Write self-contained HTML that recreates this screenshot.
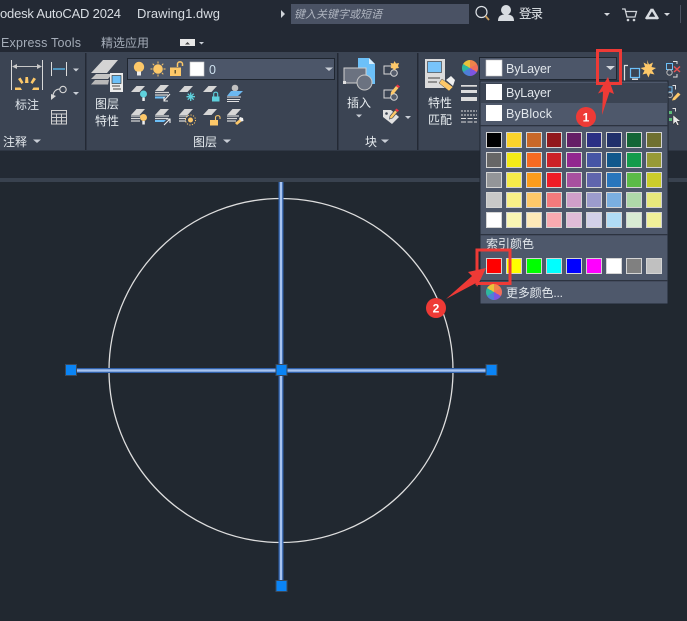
<!DOCTYPE html>
<html><head><meta charset="utf-8"><style>
html,body{margin:0;padding:0;background:#212830;width:687px;height:621px;overflow:hidden}
svg{position:absolute;left:0;top:0}
text{font-family:"Liberation Sans","Noto Sans CJK SC",sans-serif;fill:#e4eaef;font-size:12px}
.w{position:absolute;border-radius:50%;background:conic-gradient(#f0834a 0 60deg,#f26d5b 60deg 120deg,#7d55e0 120deg 180deg,#4e7fd8 180deg 240deg,#2fb89e 240deg 300deg,#e9c23a 300deg 360deg)}
</style></head><body>
<svg width="687" height="621" viewBox="0 0 687 621" xmlns="http://www.w3.org/2000/svg">
<defs>
<path id="p" d="M5.500 0H14L8.500 6H0Z" fill="#d6d6d6"/>
</defs>
<rect width="687" height="621" fill="#212830"/>
<!-- title bar -->
<rect width="687" height="52" fill="#232934"/>
<text x="0" y="18" textLength="121" style="fill:#d8dde3;font-size:13px">odesk AutoCAD 2024</text>
<text x="137" y="18" textLength="83" style="fill:#d8dde3;font-size:13px">Drawing1.dwg</text>
<path d="M281 10l4 4-4 4z" fill="#d0d4da"/>
<rect x="291" y="4" width="178" height="20" fill="#4a5264"/>
<text x="294" y="18" textLength="88" style="fill:#aeb4bf;font-size:11px;font-style:italic">键入关键字或短语</text>
<circle cx="481.500" cy="12" r="5.500" fill="none" stroke="#dde1e6" stroke-width="1.200"/><path d="M485.500 16l3.500 4" stroke="#c89a5a" stroke-width="1.800"/>
<circle cx="506" cy="10" r="5" fill="#d8dce1"/><path d="M498 21c0-6 4-6.500 8-6.500s8 .5 8 6.500z" fill="#d8dce1"/>
<text x="519" y="18" textLength="24" style="fill:#e4e8ec;font-size:12.500px">登录</text>
<path d="M604 13h6l-3 3z" fill="#d5d8dd"/>
<path d="M622 9h3l2 8h8l1.500-5.500H626" fill="none" stroke="#cfd3d8" stroke-width="1.300"/><circle cx="628" cy="20" r="1.300" fill="#cfd3d8"/><circle cx="634" cy="20" r="1.300" fill="#cfd3d8"/>
<path d="M652 9l-6 10M652 9l6 10M647 18h10" stroke="#d8dce1" stroke-width="2.500" fill="none"/>
<path d="M664 13h6l-3 3z" fill="#d5d8dd"/>
<rect x="680" y="5" width="1" height="18" fill="#4a5160"/>
<!-- tabs -->
<text x="1" y="47" textLength="80" style="fill:#a4acb8;font-size:12.500px">Express Tools</text>
<text x="101" y="47" textLength="48" style="fill:#a4acb8">精选应用</text>
<rect x="180" y="39" width="15" height="7" fill="#e8e8e8"/><path d="M185 44.500h5l-2.500-2.500z" fill="#444"/>
<path d="M199 42h5l-2.500 2.500z" fill="#c9ced6"/>
<!-- ribbon -->
<rect y="52" width="687" height="98.500" fill="#3b4453"/>
<rect x="85" y="53" width="1.500" height="97" fill="#232934"/>
<rect x="337" y="53" width="1.500" height="97" fill="#232934"/>
<rect x="417" y="53" width="1.500" height="97" fill="#232934"/>
<rect x="0" y="150.500" width="687" height="27.500" fill="#232a34"/>
<rect x="0" y="178" width="687" height="4" fill="#39424f"/>
<!-- annotate panel -->
<path d="M11.500 60v30M42.500 60v30" stroke="#d8d8d8" stroke-width="1"/>
<path d="M13 66.500H41" stroke="#c8c8c8" stroke-width="1"/><path d="M12 66.500l5-2.500v5zM42 66.500l-5-2.500v5z" fill="#c8c8c8"/>
<path d="M25.500 77h2.500l.5 6h-3.500zM18 79l2.500-1.500 3 5-2 1.500zM36 79l-2.500-1.500-3 5 2 1.500zM15 87.500h5.500l1.500 2.500h-7zM39 87.500h-5.500l-1.500 2.500h7z" fill="#fdc869"/>
<text x="15" y="109" textLength="24" style="fill:#dde3e9">标注</text>
<path d="M51.500 62v14M66.500 62v14" stroke="#dcdcdc"/><path d="M53 69H65" stroke="#5cc0f5" stroke-width="1.300"/>
<path d="M73 68.500h6l-3 3z" fill="#c9ced6"/>
<circle cx="63" cy="89.500" r="3.200" fill="none" stroke="#d8d8d8" stroke-width="1.100"/><path d="M60 89c-4 0-6 2-7 6" fill="none" stroke="#d8d8d8" stroke-width="1.100"/><path d="M51 100l0-6 5 2z" fill="#d8d8d8"/>
<path d="M73 92h6l-3 3z" fill="#c9ced6"/>
<path d="M51.500 110.500h15v13.500h-15zM51.500 114h15M51.500 117.500h15M51.500 121h15M56.500 114v10M61.500 114v10" fill="none" stroke="#d0d0d0" stroke-width="1"/>
<text x="3" y="146" textLength="24" style="fill:#e0e5ea">注释</text>
<path d="M33 139.500h8l-4 3.500z" fill="#c9ced6"/>
<!-- layers panel -->
<path d="M91 73l12-13h15l-11 13z" fill="#d4d4d4"/><path d="M91 79l5-5h16l-4 5z" fill="#c4c4c4"/><path d="M91 84.500l4-4.500h14l-1 4.500z" fill="#b8b8b8"/>
<rect x="110" y="73" width="13" height="19" fill="#ececec"/><rect x="112" y="75.500" width="9" height="8" fill="#6cc0f8" stroke="#222" stroke-width=".6"/><path d="M112 86h8M113 89h8" stroke="#444" stroke-width="1"/>
<text x="95" y="108" textLength="24" style="fill:#e6ebef">图层</text>
<text x="95" y="125" textLength="24" style="fill:#e6ebef">特性</text>
<rect x="127.500" y="58.500" width="207" height="21" fill="#4c5669" stroke="#1f2630"/>
<circle cx="139" cy="67" r="5.200" fill="#fdc869"/><rect x="137" y="71.500" width="4" height="4" fill="#ececec"/>
<circle cx="158" cy="69" r="4.800" fill="#fdc869"/><path d="M158 61.500v2M158 74.500v2M150.500 69h2M163.500 69h2M152.700 63.700l1.400 1.400M161.900 72.900l1.400 1.400M163.300 63.700l-1.400 1.400M154.100 72.900l-1.400 1.400" stroke="#fdc869" stroke-width="1"/>
<rect x="170" y="67.500" width="11" height="8.500" fill="#fdc869"/><path d="M177.500 67v-3c0-2.800 5-2.800 5 0v2" fill="none" stroke="#fdc869" stroke-width="1.500"/><rect x="174.500" y="70" width="1.500" height="3.500" fill="#6a5a30"/>
<rect x="190" y="62" width="14" height="14" fill="#fff" stroke="#c8c8c8" stroke-width=".6"/>
<text x="209" y="74" style="fill:#cde0ee;font-size:12.500px">0</text>
<path d="M325 67.500h8l-4 3.500z" fill="#c9ced6"/>
<!-- layer icons row 1 -->
<use href="#p" x="131" y="86"/><circle cx="143.500" cy="94" r="3.500" fill="#5ed0dc"/><rect x="142.300" y="97.500" width="2.500" height="3.500" fill="#eee"/>
<use href="#p" x="155" y="85"/><path d="M155 92.500h14M155 95h13" stroke="#d6d6d6" stroke-width="1.300"/><path d="M155 96.500h11l-2 2h-9z" fill="#6cc0f8"/><path d="M170 94l-6 6.500M164 97v4h4" stroke="#eee" stroke-width="1.100" fill="none"/>
<use href="#p" x="179" y="86"/><path d="M190.700 92.500v8.500M186.500 96.700h8.500M187.700 93.700l6 6M193.700 93.700l-6 6" stroke="#5ed0dc" stroke-width="1.300"/>
<use href="#p" x="203" y="86"/><rect x="212" y="96.500" width="7.500" height="5" fill="#5ed0dc"/><path d="M213.700 96.500v-2.500c0-2.400 4-2.400 4 0v2.500" fill="none" stroke="#5ed0dc" stroke-width="1.100"/>
<circle cx="235" cy="88" r="3.300" fill="#c0c0c0"/><path d="M231 91h12l-5 5h-11z" fill="#6cb8f0"/><path d="M227 97h14M227 99.500h13M227 101.500h12" stroke="#e0e0e0"/>
<!-- row 2 -->
<use href="#p" x="131" y="109"/><path d="M131 116h10M131 118.500h9M131 121h9" stroke="#d6d6d6" stroke-width="1.300"/><circle cx="143.500" cy="117.500" r="3.500" fill="#fdc869"/><rect x="142.300" y="121" width="2.500" height="3.500" fill="#eee"/>
<use href="#p" x="155" y="109"/><path d="M155 116h14M155 118.500h13" stroke="#d6d6d6" stroke-width="1.300"/><path d="M155 120h11l-2 2h-9z" fill="#6cc0f8"/><path d="M164 125l6-6M166 119h4v4" stroke="#eee" stroke-width="1.100" fill="none"/>
<use href="#p" x="179" y="109"/><path d="M179 116h9M179 118.500h7M179 121h7" stroke="#d6d6d6" stroke-width="1.300"/><circle cx="190.500" cy="120" r="2.500" fill="#fdc869"/><circle cx="190.500" cy="120" r="5" fill="none" stroke="#fdc869" stroke-dasharray="1.200 1.400"/>
<use href="#p" x="203" y="109"/><rect x="210" y="120" width="8" height="5.500" fill="#fdc869"/><path d="M215.500 120v-2.500c0-2.500 4.500-2.500 4.500 0v1.500" fill="none" stroke="#fdc869" stroke-width="1.100"/>
<use href="#p" x="227" y="109"/><path d="M227 116h12M227 118.500h10M227 121h9" stroke="#d6d6d6" stroke-width="1.300"/><path d="M235 123l5-4 2 2-5 4z" fill="#fdc869"/><path d="M240 117l3 1 .5 3-2 .5-2.500-2.500z" fill="#f0f0f0"/>
<text x="193" y="146" textLength="24" style="fill:#e6ebef">图层</text>
<path d="M223 139.500h8l-4 3.500z" fill="#c9ced6"/>
<!-- block panel -->
<path d="M358 58h11l6 6v20h-17z" fill="#6cc0f8"/><path d="M369 58l6 6h-6z" fill="#d8eefc"/>
<rect x="344" y="68" width="22" height="15" fill="#6b7280" stroke="#d0d0d0" stroke-width="1"/><rect x="343" y="81" width="3" height="3" fill="#e0e0e0"/>
<circle cx="364.500" cy="82.500" r="7.500" fill="#6b7280" stroke="#c8c8c8" stroke-width="1"/>
<text x="347" y="107" textLength="24" style="fill:#e6ebef">插入</text>
<path d="M356 114.500h6l-3 3z" fill="#c9ced6"/>
<path d="M384 66h10v8h-10z" fill="none" stroke="#d8d8d8"/><circle cx="394" cy="73" r="3.300" fill="#555d6c" stroke="#d8d8d8"/><path d="M394.500 61l1.500 2.500 3-.5-1 3 1 2-3 .5-1.500 2-1.500-2-2.500-.5 1-2-1-3 3 .5z" fill="#fdc869"/>
<path d="M384 90h10v8h-10z" fill="none" stroke="#d8d8d8"/><circle cx="394" cy="97" r="3.300" fill="#555d6c" stroke="#d8d8d8"/><path d="M391 92l5-6 2.500 2-5 6-3 1z" fill="#fdc869"/><path d="M396 86l1.500-1.500 2.500 2-1.500 1.500z" fill="#e34"/>
<path d="M383 110h8l8 7-7 7-9-7z" fill="#e2e2e2"/><circle cx="386.500" cy="113.500" r="1.300" fill="#3b4453"/><path d="M390 116l5-6 2.500 2-5 6-3 1z" fill="#fdc869" stroke="#3b4453" stroke-width=".6"/><path d="M395 110l1.500-1.500 2.500 2-1.500 1.500z" fill="#e34"/>
<path d="M405 116h6l-3 3z" fill="#c9ced6"/>
<text x="365" y="146" style="fill:#e6ebef">块</text>
<path d="M381 139.500h8l-4 3.500z" fill="#c9ced6"/>
<!-- properties panel -->
<rect x="425" y="59" width="20" height="29" fill="#dcdcdc"/><rect x="427.500" y="61.500" width="14" height="11" fill="#78c4fa" stroke="#333" stroke-width=".6"/><path d="M428 78h12M428 82h9" stroke="#444" stroke-width=".9"/>
<path d="M439 83l3-4 11 8-4 4z" fill="#fdc869" stroke="#3b4453" stroke-width=".5"/><path d="M446 80l5-4 4 4-2 6z" fill="#f0f0f0"/>
<text x="428" y="107" textLength="24" style="fill:#e6ebef">特性</text>
<text x="428" y="124" textLength="24" style="fill:#e6ebef">匹配</text>
<rect x="461" y="85" width="16" height="1.700" fill="#dcdcdc"/><rect x="461" y="90" width="16" height="3" fill="#dcdcdc"/><rect x="461" y="97" width="16" height="4" fill="#dcdcdc"/>
<path d="M461 111h16M461 115h16" stroke="#dcdcdc" stroke-dasharray="2 1"/><path d="M461 118.500h16M461 122h16" stroke="#dcdcdc" stroke-dasharray="5 1.500"/>
<!-- color combo -->
<rect x="479.500" y="57.500" width="137" height="22" fill="#4c5669" stroke="#1f2630"/>
<rect x="486" y="60" width="16" height="16" fill="#fff" stroke="#c8c8c8" stroke-width=".6"/>
<text x="506" y="73" textLength="45" style="fill:#e2e7ec;font-size:12.500px">ByLayer</text>
<path d="M606 66h9l-4.500 4z" fill="#d2d6dc"/>
<!-- right tools -->
<path d="M628 65.500h-3.500V81" fill="none" stroke="#e0e0e0" stroke-width="1.200"/>
<rect x="630.500" y="68.500" width="9" height="9" fill="none" stroke="#6cc0f8" stroke-width="1.200"/>
<rect x="632" y="78.500" width="6" height="1.500" fill="#dcdcdc"/>
<path d="M647 60l2 4.500 4-2-1.500 4.500 4.500 1-4 2.500 2.500 4-4.500-1-1.500 4-2-4-4 1 2-4-4-2.500 4.500-1-1.500-4.500 4 2z" fill="#fdc869"/>
<rect x="666.500" y="63.500" width="6" height="6" fill="none" stroke="#6cc0f8"/><circle cx="669.500" cy="72.500" r="2.700" fill="none" stroke="#b8b8b8"/><path d="M674 66.500l6 5.500M680 66.500l-6 5.500" stroke="#e85050" stroke-width="1.500"/><path d="M673 61.500h4v2.500M677 74v3h-4" fill="none" stroke="#e0e0e0"/>
<path d="M672.500 85.500h3v4" fill="none" stroke="#e0e0e0"/><rect x="668" y="87" width="4" height="5" fill="none" stroke="#6cc0f8"/><circle cx="670" cy="95" r="2.500" fill="none" stroke="#b8b8b8"/><path d="M673 98l5-5.500 2.500 2-5.500 5.500-3 .5z" fill="#fdc869"/>
<path d="M673 115v9.500l2.500-2.500 1.800 3.500 1.700-.8-1.800-3.400h3.500z" fill="#e8e8e8" stroke="#333" stroke-width=".5"/><path d="M669 111h3v3h-3zM669 118h3v3h-3z" fill="#5bbb77"/><path d="M672.500 108.500h3v3" fill="none" stroke="#e0e0e0"/>
<!-- canvas drawing -->
<circle cx="281" cy="370.500" r="172" fill="none" stroke="#dedede" stroke-width="1.300"/>
<rect x="70" y="368" width="421" height="5" fill="#2f5fa8"/><rect x="70" y="369.300" width="421" height="2.400" fill="#a8c4f0"/>
<rect x="278.500" y="182" width="5" height="404" fill="#2f5fa8"/><rect x="279.800" y="182" width="2.400" height="404" fill="#a8c4f0"/>
<g fill="#0a84f5" stroke="#3b4a5c" stroke-width="1"><rect x="65.500" y="364.500" width="11" height="11"/><rect x="276" y="364.500" width="11" height="11"/><rect x="486" y="364.500" width="11" height="11"/><rect x="276" y="580.500" width="11" height="11"/></g>
<!-- dropdown -->
<rect x="480" y="81" width="188" height="223" fill="#4e586b" stroke="#1f2630"/>
<rect x="481" y="83" width="186" height="20" fill="#3b4453"/>
<rect x="486" y="84" width="16" height="16" fill="#fff"/>
<text x="506" y="97" textLength="45" style="fill:#e2e7ec;font-size:12.500px">ByLayer</text>
<rect x="486" y="105" width="16" height="16" fill="#fff"/>
<text x="506" y="118" textLength="46" style="fill:#e2e7ec;font-size:12.500px">ByBlock</text>
<rect x="480" y="125" width="188" height="1.300" fill="#2c3340"/>
<rect x="480" y="234" width="188" height="1.300" fill="#2c3340"/>
<rect x="480" y="280" width="188" height="1.300" fill="#2c3340"/>
<g stroke="#d4d4d4" stroke-width="1">
<g>
<rect x="486.500" y="132.500" width="15" height="15" fill="#000"/><rect x="506.500" y="132.500" width="15" height="15" fill="#fcd42a"/><rect x="526.500" y="132.500" width="15" height="15" fill="#c96828"/><rect x="546.500" y="132.500" width="15" height="15" fill="#92181c"/><rect x="566.500" y="132.500" width="15" height="15" fill="#651f66"/><rect x="586.500" y="132.500" width="15" height="15" fill="#2b2f85"/><rect x="606.500" y="132.500" width="15" height="15" fill="#20306b"/><rect x="626.500" y="132.500" width="15" height="15" fill="#146636"/><rect x="646.500" y="132.500" width="15" height="15" fill="#6f7030"/>
</g><g>
<rect x="486.500" y="152.500" width="15" height="15" fill="#666666"/><rect x="506.500" y="152.500" width="15" height="15" fill="#f3ea18"/><rect x="526.500" y="152.500" width="15" height="15" fill="#f56a22"/><rect x="546.500" y="152.500" width="15" height="15" fill="#cc2027"/><rect x="566.500" y="152.500" width="15" height="15" fill="#92278f"/><rect x="586.500" y="152.500" width="15" height="15" fill="#4655a5"/><rect x="606.500" y="152.500" width="15" height="15" fill="#10588c"/><rect x="626.500" y="152.500" width="15" height="15" fill="#139b4b"/><rect x="646.500" y="152.500" width="15" height="15" fill="#989a36"/>
</g><g>
<rect x="486.500" y="172.500" width="15" height="15" fill="#939598"/><rect x="506.500" y="172.500" width="15" height="15" fill="#f6ec4a"/><rect x="526.500" y="172.500" width="15" height="15" fill="#fa9c1c"/><rect x="546.500" y="172.500" width="15" height="15" fill="#ef1c26"/><rect x="566.500" y="172.500" width="15" height="15" fill="#a8509f"/><rect x="586.500" y="172.500" width="15" height="15" fill="#5f65ad"/><rect x="606.500" y="172.500" width="15" height="15" fill="#2876bd"/><rect x="626.500" y="172.500" width="15" height="15" fill="#5bbb47"/><rect x="646.500" y="172.500" width="15" height="15" fill="#cbcc2a"/>
</g><g>
<rect x="486.500" y="192.500" width="15" height="15" fill="#c8c8c8"/><rect x="506.500" y="192.500" width="15" height="15" fill="#f8f087"/><rect x="526.500" y="192.500" width="15" height="15" fill="#fdc869"/><rect x="546.500" y="192.500" width="15" height="15" fill="#f47a7c"/><rect x="566.500" y="192.500" width="15" height="15" fill="#d09fc9"/><rect x="586.500" y="192.500" width="15" height="15" fill="#9c9ccc"/><rect x="606.500" y="192.500" width="15" height="15" fill="#7aafe0"/><rect x="626.500" y="192.500" width="15" height="15" fill="#aed9a9"/><rect x="646.500" y="192.500" width="15" height="15" fill="#e8e87c"/>
</g><g>
<rect x="486.500" y="212.500" width="15" height="15" fill="#fff"/><rect x="506.500" y="212.500" width="15" height="15" fill="#f9f6b3"/><rect x="526.500" y="212.500" width="15" height="15" fill="#fde9b8"/><rect x="546.500" y="212.500" width="15" height="15" fill="#f9aab0"/><rect x="566.500" y="212.500" width="15" height="15" fill="#e0bcd8"/><rect x="586.500" y="212.500" width="15" height="15" fill="#d2d0e8"/><rect x="606.500" y="212.500" width="15" height="15" fill="#b0dcf6"/><rect x="626.500" y="212.500" width="15" height="15" fill="#d8ebd3"/><rect x="646.500" y="212.500" width="15" height="15" fill="#f0f099"/>
</g><g>
<rect x="486.500" y="258.500" width="15" height="15" fill="#f00"/><rect x="506.500" y="258.500" width="15" height="15" fill="#ff0"/><rect x="526.500" y="258.500" width="15" height="15" fill="#0f0"/><rect x="546.500" y="258.500" width="15" height="15" fill="#0ff"/><rect x="566.500" y="258.500" width="15" height="15" fill="#00f"/><rect x="586.500" y="258.500" width="15" height="15" fill="#f0f"/><rect x="606.500" y="258.500" width="15" height="15" fill="#fff"/><rect x="626.500" y="258.500" width="15" height="15" fill="#808080"/><rect x="646.500" y="258.500" width="15" height="15" fill="#c0c0c0"/>
</g></g>
<text x="486" y="248" textLength="48" style="fill:#e2e7ec">索引颜色</text>
<text x="506" y="297" textLength="57" style="fill:#e2e7ec">更多颜色...</text>
<!-- annotations -->
<rect x="597.500" y="50.500" width="23" height="33" fill="none" stroke="#ee3a36" stroke-width="3"/>
<path d="M608 77l6 17-4.500-2L602 115l1-23.500-5 2z" fill="#ee3a36"/>
<circle cx="586" cy="117" r="10" fill="#ee3a36"/>
<text x="586" y="121.500" text-anchor="middle" style="fill:#fff;font-size:12px;font-weight:bold">1</text>
<rect x="477" y="250" width="33" height="33.500" fill="none" stroke="#ee3a36" stroke-width="3"/>
<path d="M486 268l-9 19-1-4-30 16 26-23-4-4z" fill="#ee3a36"/>
<circle cx="436" cy="308" r="10" fill="#ee3a36"/>
<text x="436" y="312.500" text-anchor="middle" style="fill:#fff;font-size:12px;font-weight:bold">2</text>
</svg>
<div class="w" style="left:462px;top:60px;width:16px;height:16px"></div>
<div class="w" style="left:486px;top:284px;width:16px;height:16px"></div>
</body></html>
